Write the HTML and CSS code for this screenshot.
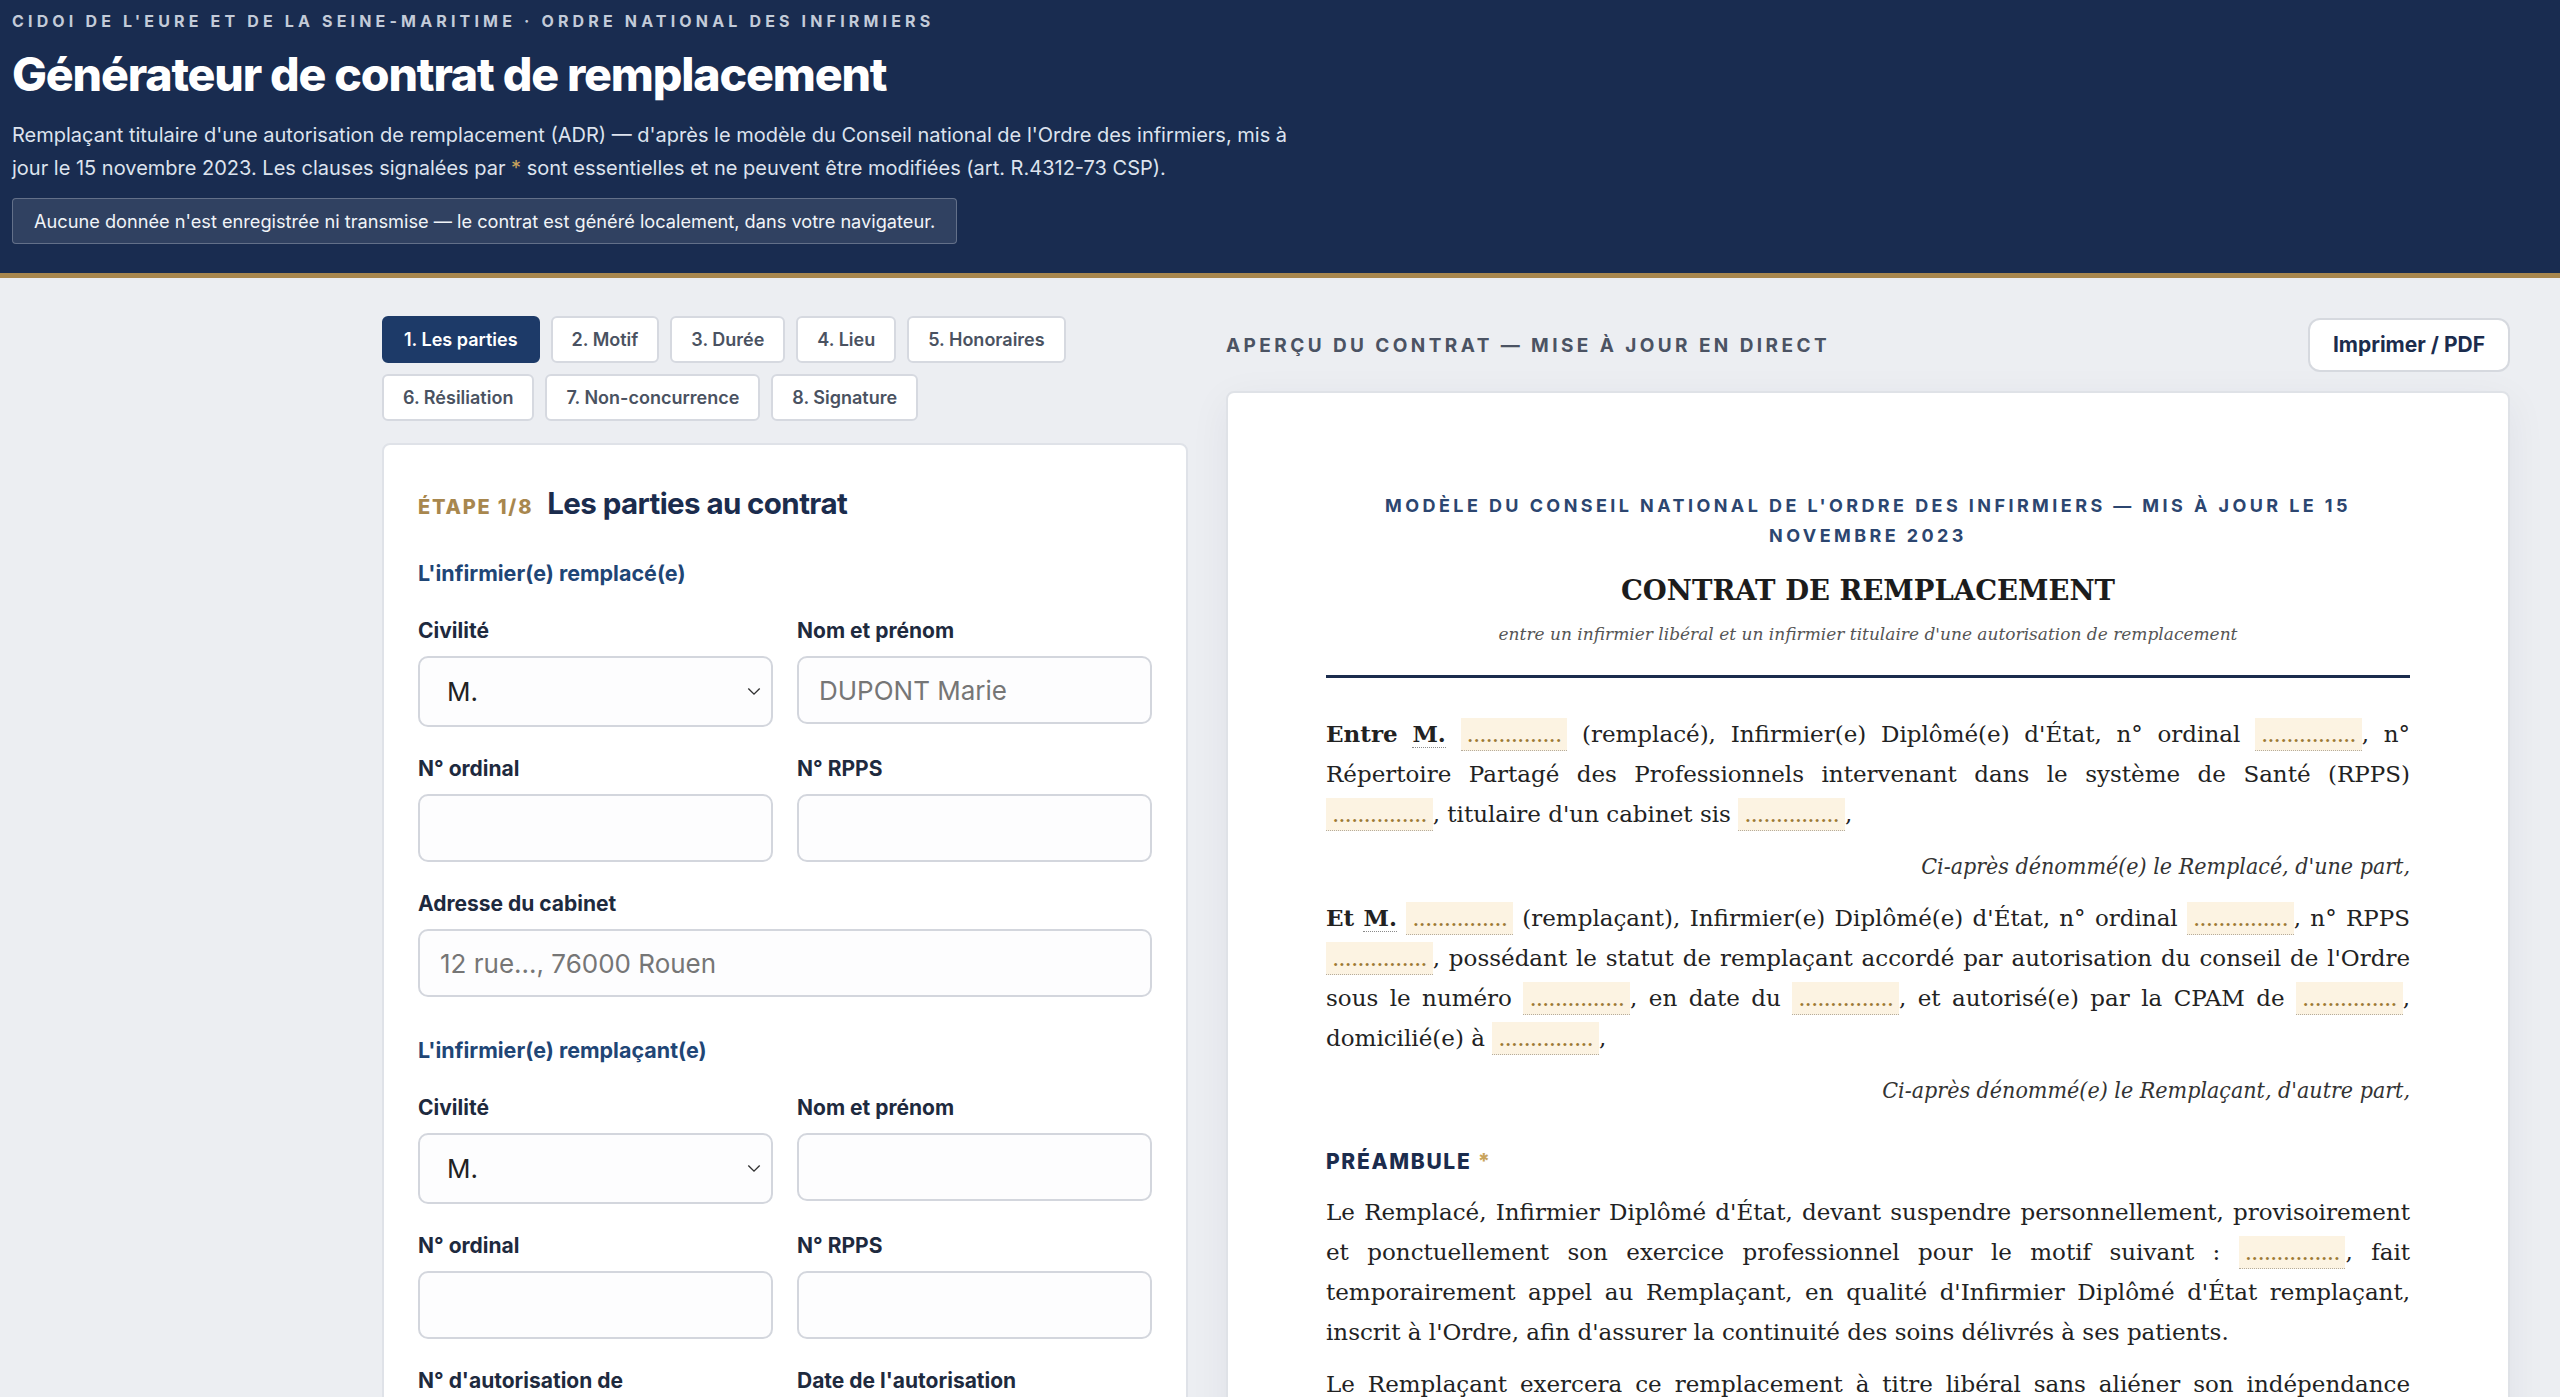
FILE: index.html
```html
<!DOCTYPE html>
<html lang="fr">
  <head>
    <meta charset="UTF-8" />
    <title>Générateur de contrat de remplacement</title>
    <link rel="stylesheet" href="styles.css">
  </head>
  <body>
    <header class="site-header">
      <p class="org">CIDOI de l'Eure et de la Seine-Maritime · Ordre national des infirmiers</p>
      <h1>Générateur de contrat de remplacement</h1>
      <p class="intro">
        Remplaçant titulaire d'une autorisation de remplacement (ADR) — d'après le modèle du Conseil national de l'Ordre des infirmiers, mis à
        jour le 15 novembre 2023. Les clauses signalées par <span class="req">*</span> sont essentielles et ne peuvent être modifiées (art. R.4312-73 CSP).
      </p>
      <div class="notice">Aucune donnée n'est enregistrée ni transmise — le contrat est généré localement, dans votre navigateur.</div>
    </header>

    <main class="layout">
      <section class="editor">
        <nav class="steps">
          <button class="step active">1. Les parties</button>
          <button class="step">2. Motif</button>
          <button class="step">3. Durée</button>
          <button class="step">4. Lieu</button>
          <button class="step">5. Honoraires</button>
          <button class="step">6. Résiliation</button>
          <button class="step">7. Non-concurrence</button>
          <button class="step">8. Signature</button>
        </nav>

        <div class="card">
          <div class="card-head">
            <span class="step-no">Étape 1/8</span>
            <h2>Les parties au contrat</h2>
          </div>

          <!-- remplacé -->
          <h3 class="party">L'infirmier(e) remplacé(e)</h3>
          <div class="fields">
            <div class="field">
              <label for="r-civ">Civilité</label>
              <div class="select-wrap">
                <select id="r-civ"><option>M.</option><option>Mme</option></select>
                <svg class="chevron" viewBox="0 0 16 10" width="16" height="10"><path d="M1.5 1.5 8 8l6.5-6.5" fill="none" stroke="#333" stroke-width="1.6"/></svg>
              </div>
            </div>
            <div class="field">
              <label for="r-nom">Nom et prénom</label>
              <input id="r-nom" placeholder="DUPONT Marie" />
            </div>
            <div class="field">
              <label for="r-ord">N° ordinal</label>
              <input id="r-ord" />
            </div>
            <div class="field">
              <label for="r-rpps">N° RPPS</label>
              <input id="r-rpps" />
            </div>
            <div class="field wide">
              <label for="r-adr">Adresse du cabinet</label>
              <input id="r-adr" placeholder="12 rue..., 76000 Rouen" />
            </div>
          </div>

          <!-- remplaçant -->
          <h3 class="party">L'infirmier(e) remplaçant(e)</h3>
          <div class="fields">
            <div class="field">
              <label for="s-civ">Civilité</label>
              <div class="select-wrap">
                <select id="s-civ"><option>M.</option><option>Mme</option></select>
                <svg class="chevron" viewBox="0 0 16 10" width="16" height="10"><path d="M1.5 1.5 8 8l6.5-6.5" fill="none" stroke="#333" stroke-width="1.6"/></svg>
              </div>
            </div>
            <div class="field">
              <label for="s-nom">Nom et prénom</label>
              <input id="s-nom" />
            </div>
            <div class="field">
              <label for="s-ord">N° ordinal</label>
              <input id="s-ord" />
            </div>
            <div class="field">
              <label for="s-rpps">N° RPPS</label>
              <input id="s-rpps" />
            </div>
            <div class="field">
              <label for="s-adr-no">N° d'autorisation de remplacement</label>
              <input id="s-adr-no" />
            </div>
            <div class="field">
              <label for="s-adr-date">Date de l'autorisation</label>
              <input id="s-adr-date" />
            </div>
            <div class="field">
              <label for="s-cpam">CPAM</label>
              <input id="s-cpam" />
            </div>
            <div class="field">
              <label for="s-dom">Domicile</label>
              <input id="s-dom" />
            </div>
          </div>
        </div>
      </section>

      <section class="preview">
        <div class="preview-bar">
          <h2>Aperçu du contrat — mise à jour en direct</h2>
          <button class="print">Imprimer / PDF</button>
        </div>

        <article class="doc">
          <p class="doc-source">Modèle du Conseil national de l'Ordre des infirmiers — mis à jour le 15 novembre 2023</p>
          <h1 class="doc-title">CONTRAT DE REMPLACEMENT</h1>
          <p class="doc-sub">entre un infirmier libéral et un infirmier titulaire d'une autorisation de remplacement</p>

          <p><b>Entre</b> <span class="val">M.</span> <span class="blank">...............</span> (remplacé), Infirmier(e) Diplômé(e) d'État, n° ordinal <span class="blank">...............</span>, n° Répertoire Partagé des Professionnels intervenant dans le système de Santé (RPPS) <span class="blank">...............</span>, titulaire d'un cabinet sis <span class="blank">...............</span>,</p>
          <p class="party-end">Ci-après dénommé(e) le Remplacé, d'une part,</p>

          <p><b>Et</b> <span class="val">M.</span> <span class="blank">...............</span> (remplaçant), Infirmier(e) Diplômé(e) d'État, n° ordinal <span class="blank">...............</span>, n° RPPS <span class="blank">...............</span>, possédant le statut de remplaçant accordé par autorisation du conseil de l'Ordre sous le numéro <span class="blank">...............</span>, en date du <span class="blank">...............</span>, et autorisé(e) par la CPAM de <span class="blank">...............</span>, domicilié(e) à <span class="blank">...............</span>,</p>
          <p class="party-end">Ci-après dénommé(e) le Remplaçant, d'autre part,</p>

          <h4>Préambule <span class="req">*</span></h4>
          <p>Le Remplacé, Infirmier Diplômé d'État, devant suspendre personnellement, provisoirement et ponctuellement son exercice professionnel pour le motif suivant : <span class="blank">...............</span>, fait temporairement appel au Remplaçant, en qualité d'Infirmier Diplômé d'État remplaçant, inscrit à l'Ordre, afin d'assurer la continuité des soins délivrés à ses patients.</p>
          <p>Le Remplaçant exercera ce remplacement à titre libéral sans aliéner son indépendance professionnelle, dans le respect des règles du code de déontologie des infirmiers.</p>
        </article>
      </section>
    </main>
  </body>
</html>
```

FILE: styles.css
```css
body {
  margin: 0;
  font-family: Inter, "Liberation Sans", sans-serif;
  background: #eceef2;
  color: #1d2637;
}

/* top banner */
.site-header {
  background: #192c50;
  border-bottom: 5px solid #a8874e;
  padding: 10px 12px 29px;
  color: #fff;
}
.org {
  margin: 0;
  font-size: 16px;
  font-weight: 700;
  letter-spacing: 0.26em;
  text-transform: uppercase;
  color: #c3cbd9;
  line-height: 22px;
}
.site-header h1 {
  margin: 16px 0 0;
  font-size: 46.5px;
  font-weight: 800;
  letter-spacing: -0.025em;
  line-height: 52px;
}
.intro {
  margin: 19px 0 0;
  max-width: 1300px;
  font-size: 20px;
  line-height: 33px;
  color: #dde3ee;
}
.req {
  color: #c9a45c;
}
.notice {
  display: inline-block;
  margin-top: 13px;
  padding: 11px 21px;
  font-size: 18.2px;
  line-height: 22px;
  color: #f1f4f8;
  background: rgba(255, 255, 255, 0.1);
  border: 1px solid rgba(255, 255, 255, 0.25);
  border-radius: 4px;
}

/* two columns */
.layout {
  display: grid;
  grid-template-columns: 806px 1fr;
  gap: 38px;
  padding: 38px 50px 40px 382px;
  align-items: start;
}

/* step tabs */
.steps {
  display: flex;
  flex-wrap: wrap;
  gap: 11px 11px;
  margin-bottom: 22px;
}
.step {
  font-family: inherit;
  font-size: 18px;
  font-weight: 600;
  line-height: 21px;
  padding: 11px 19px;
  color: #4a5261;
  background: #fff;
  border: 2px solid #d6d9e0;
  border-radius: 6px;
}
.step.active {
  color: #fff;
  background: #1d3a68;
  border-color: #1d3a68;
  padding: 11px 20px;
}

/* form card */
.card {
  background: #fff;
  border: 2px solid #dfe2e8;
  border-radius: 8px;
  padding: 40px 34px 40px;
}
.card-head {
  display: flex;
  align-items: baseline;
  gap: 14px;
}
.step-no {
  font-size: 20px;
  font-weight: 800;
  letter-spacing: 0.09em;
  text-transform: uppercase;
  color: #a8874e;
}
.card-head h2 {
  margin: 0;
  font-size: 29.5px;
  font-weight: 700;
  letter-spacing: -0.02em;
  line-height: 36px;
  color: #1b2c4d;
}
.party {
  margin: 39px 0 32px;
  font-size: 21.5px;
  font-weight: 700;
  line-height: 26px;
  color: #1f4676;
}
.fields + .party {
  margin-top: 40px;
}
.fields {
  display: grid;
  grid-template-columns: 1fr 1fr;
  gap: 29px 24px;
  align-items: start;
}
.field.wide {
  grid-column: 1 / -1;
}
.field label {
  display: block;
  margin-bottom: 13px;
  font-size: 21px;
  font-weight: 700;
  line-height: 25px;
  color: #1e2a3e;
}
.field input,
.field select {
  width: 100%;
  height: 68px;
  box-sizing: border-box;
  padding: 0 20px;
  font-family: inherit;
  font-size: 26px;
  color: #222;
  background: #fdfdfe;
  border: 2px solid #d3d6dd;
  border-radius: 10px;
}
.field input::placeholder {
  color: #767676;
}
.select-wrap {
  position: relative;
}
.field select {
  height: 71px;
  padding-left: 27px;
  appearance: none;
}
.chevron {
  position: absolute;
  right: 12px;
  top: 31px;
  width: 14px;
  height: 9px;
}

/* preview column */
.preview-bar {
  display: flex;
  justify-content: space-between;
  align-items: center;
  margin: 2px 0 19px;
}
.preview-bar h2 {
  margin: 0;
  font-size: 19px;
  font-weight: 700;
  letter-spacing: 0.18em;
  text-transform: uppercase;
  color: #4b5363;
}
.print {
  font-family: inherit;
  font-size: 21px;
  font-weight: 700;
  color: #1b2c4d;
  padding: 13px 23px;
  line-height: 24px;
  background: #fff;
  border: 2px solid #d6d9df;
  border-radius: 12px;
}
.doc {
  background: #fff;
  border: 2px solid #dfe2e7;
  border-radius: 8px;
  box-shadow: 0 10px 40px rgba(30, 40, 70, 0.06);
  padding: 98px 98px 80px;
  font-family: "DejaVu Serif", serif;
  font-size: 23px;
  line-height: 40px;
  color: #222;
}
.doc p {
  margin: 0 0 12px;
  text-align: justify;
}
.doc .doc-source {
  margin: 0;
  font-family: Inter, "Liberation Sans", sans-serif;
  font-size: 18px;
  font-weight: 700;
  line-height: 30px;
  letter-spacing: 0.19em;
  text-transform: uppercase;
  text-align: center;
  color: #2c4670;
}
.doc-title {
  margin: 19px 0 0;
  font-size: 27.5px;
  line-height: 40px;
  text-align: center;
  color: #1c1c1c;
}
.doc .doc-sub {
  margin: 11px 0 36px;
  padding-bottom: 28px;
  border-bottom: 3px solid #1b2c4d;
  font-size: 17px;
  font-style: italic;
  line-height: 26px;
  text-align: center;
  color: #555;
}
.doc .party-end {
  font-family: "DejaVu Serif Condensed", "DejaVu Serif", serif;
  font-stretch: condensed;
  font-style: italic;
  text-align: right;
  color: #333;
}
.val {
  font-weight: 700;
  border-bottom: 1px dotted #8a8a8a;
}
.blank {
  padding: 3px 6px;
  letter-spacing: -1px;
  color: #9c7a35;
  background: #fcf3e2;
  border-bottom: 1px dotted #b5ac9c;
}
.doc h4 {
  margin: 37px 0 15px;
  font-family: Inter, "Liberation Sans", sans-serif;
  font-size: 21px;
  font-weight: 800;
  letter-spacing: 0.08em;
  line-height: 30px;
  text-transform: uppercase;
  color: #1b2c4d;
}
```
